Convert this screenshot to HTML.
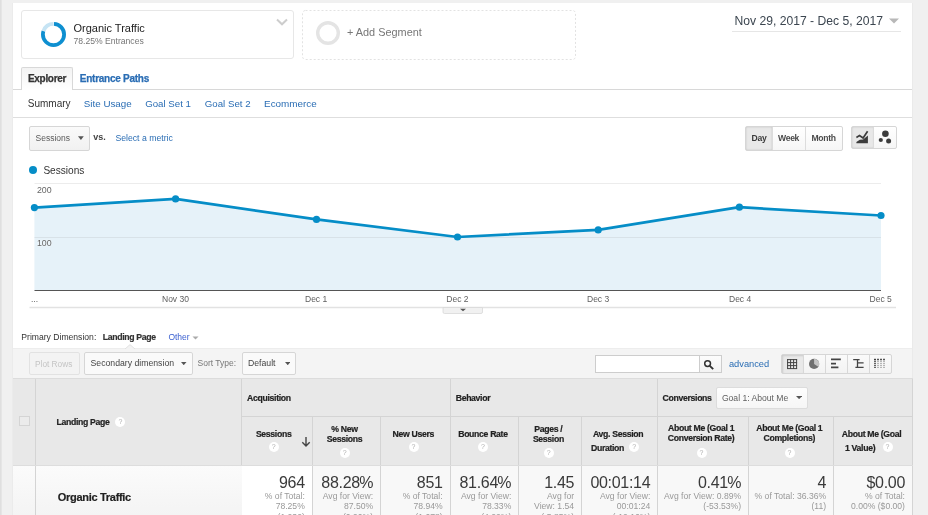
<!DOCTYPE html>
<html><head><meta charset="utf-8">
<style>
*{box-sizing:border-box;margin:0;padding:0}
html,body{width:928px;height:515px;overflow:hidden;background:#f0f0f0;font-family:"Liberation Sans",sans-serif;color:#333}
.a{position:absolute;white-space:nowrap}
#lstrip{position:absolute;left:0;top:0;width:2px;height:515px;background:linear-gradient(90deg,#dcdcdc,#e8e8e8)}
#panel{position:absolute;left:13px;top:3px;width:899px;height:512px;background:#fff;box-shadow:-1px 0 0 #ebebeb,1px 0 0 #eaeaea}
.seg{position:absolute;border:1px solid #e7e7e7;border-radius:3px;background:#fff}
.link{color:#2a6db4}
.btn{position:absolute;border:1px solid #d6d6d6;border-radius:2px;background:linear-gradient(#fafafa,#f1f1f1)}
.th{position:absolute;background:#e8e8e8}
.vl{position:absolute;width:1px;background:#d4d4d4}
.hl{position:absolute;height:1px;background:#d4d4d4}
.hdr{font-weight:700;font-size:8.7px;letter-spacing:-0.33px;color:#222;-webkit-text-stroke:0.2px #222}
.q{position:absolute;width:10px;height:10px;border-radius:50%;background:#fff;color:#b0b0b0;font-size:7px;line-height:10px;text-align:center;font-weight:400}
.big{font-size:16px;letter-spacing:-0.3px;color:#3a3a3a;line-height:17px;margin-top:-0.6px}
.pc{letter-spacing:-1px}
.sub{font-size:8.6px;color:#999;line-height:10.5px}
</style></head><body><div style="position:absolute;left:0;top:0;width:928px;height:515px;will-change:transform">
<div id="lstrip"></div>
<div id="panel"></div>

<!-- segment boxes -->
<div class="seg" style="left:21px;top:10px;width:273px;height:49px"></div>
<svg class="a" style="left:40.3px;top:20.6px" width="27" height="27" viewBox="0 0 27 27">
  <g transform="rotate(-90 13.5 13.5)" fill="none" stroke-width="3.8">
  <circle cx="13.5" cy="13.5" r="10.6" stroke="#c6e4f4" stroke-dasharray="0 53.4 13.4 100"/>
  <circle cx="13.5" cy="13.5" r="10.6" stroke="#0e8fd0" stroke-dasharray="0 0.5 52.5 100"/>
  </g>
</svg>
<div class="a" style="left:73.5px;top:22px;font-size:11px;color:#222">Organic Traffic</div>
<div class="a" style="left:73.5px;top:35.5px;font-size:8.6px;color:#757575">78.25% Entrances</div>
<svg class="a" style="left:275px;top:18px" width="14" height="9" viewBox="0 0 14 9"><path d="M2 1.6 L7 6.3 L12 1.6" fill="none" stroke="#cdcdcd" stroke-width="2"/></svg>

<svg class="a" style="left:300.8px;top:8.8px" width="276" height="52" viewBox="0 0 276 52"><rect x="1.5" y="1.5" width="273" height="49" rx="3" fill="#fff" stroke="#e2e2e2" stroke-width="1" stroke-dasharray="2 2"/></svg>
<svg class="a" style="left:314.7px;top:20px" width="26" height="26" viewBox="0 0 26 26"><circle cx="13" cy="13" r="10.3" fill="none" stroke="#e4e4e4" stroke-width="3.4"/></svg>
<div class="a" style="left:347px;top:26px;font-size:10.9px;color:#777">+ Add Segment</div>

<!-- date -->
<div class="a" style="left:734.5px;top:14px;font-size:12.15px;color:#3c4650">Nov 29, 2017 - Dec 5, 2017</div>
<svg class="a" style="left:888px;top:18px" width="12" height="6" viewBox="0 0 12 6"><path d="M1 0.5 L11 0.5 L6 5.5Z" fill="#b8b8b8"/></svg>
<div class="a" style="left:732px;top:30.5px;width:169px;height:1px;background:#e6e6e6"></div>

<!-- tabs -->
<div class="hl" style="left:13px;top:89px;width:899px;background:#d8d8d8"></div>
<div class="a" style="left:20.6px;top:67px;width:52px;height:22.5px;border:1px solid #d8d8d8;border-bottom:none;background:linear-gradient(#f3f3f3,#fff);border-radius:2px 2px 0 0"></div>
<div class="a" style="left:28px;top:72.5px;font-size:10px;letter-spacing:-0.32px;font-weight:700;color:#333;-webkit-text-stroke:0.25px #333">Explorer</div>
<div class="a link" style="left:79.8px;top:72.5px;font-size:10px;letter-spacing:-0.26px;font-weight:700;-webkit-text-stroke:0.25px #2a6db4">Entrance Paths</div>
<div class="a" style="left:27.8px;top:98px;font-size:10px;color:#333">Summary</div>
<div class="a link" style="left:83.8px;top:97.5px;font-size:9.8px">Site Usage</div>
<div class="a link" style="left:145.2px;top:97.5px;font-size:9.7px">Goal Set 1</div>
<div class="a link" style="left:204.8px;top:97.5px;font-size:9.7px">Goal Set 2</div>
<div class="a link" style="left:264.1px;top:97.5px;font-size:9.9px">Ecommerce</div>
<div class="hl" style="left:13px;top:117px;width:899px;background:#dedede"></div>

<!-- chart controls -->
<div class="btn" style="left:29px;top:126px;width:61px;height:25px"></div>
<div class="a" style="left:35.5px;top:133.4px;font-size:8.5px;color:#5a5a5a">Sessions</div>
<svg class="a" style="left:77.8px;top:136px" width="6" height="4" viewBox="0 0 6 4"><path d="M0 0.2H5.8L2.9 4Z" fill="#555"/></svg>
<div class="a" style="left:93.3px;top:131.8px;font-size:9px;font-weight:700;color:#444">vs.</div>
<div class="a link" style="left:115.4px;top:133.2px;font-size:8.7px">Select a metric</div>

<div class="btn" style="left:745px;top:126px;width:98px;height:24.5px;background:linear-gradient(#fff,#f6f6f6)"></div>
<div class="a" style="left:746px;top:127px;width:26px;height:22.5px;background:#e8e8e8;box-shadow:inset 0 0 2px rgba(0,0,0,.18)"></div>
<div class="vl" style="left:772px;top:127px;height:22.5px;background:#dcdcdc"></div>
<div class="vl" style="left:805px;top:127px;height:22.5px;background:#dcdcdc"></div>
<div class="a" style="left:751.5px;top:133.2px;font-size:8.6px;letter-spacing:-0.3px;font-weight:700;color:#3a3a3a">Day</div>
<div class="a" style="left:778px;top:133.2px;font-size:8.6px;letter-spacing:-0.3px;font-weight:700;color:#4a4a4a">Week</div>
<div class="a" style="left:811.5px;top:133.2px;font-size:8.6px;letter-spacing:-0.3px;font-weight:700;color:#4a4a4a">Month</div>

<div class="btn" style="left:851px;top:126px;width:46px;height:22.6px;background:linear-gradient(#fff,#f6f6f6)"></div>
<div class="a" style="left:852px;top:127px;width:21.5px;height:20.6px;background:#e8e8e8;box-shadow:inset 0 0 2px rgba(0,0,0,.18)"></div>
<div class="vl" style="left:873px;top:127px;height:20.6px;background:#dcdcdc"></div>
<svg class="a" style="left:848px;top:124px" width="50" height="26" viewBox="0 0 50 26"><path d="M8.4 19.3H19.9V11.5L15.1 15.4L11.8 15.7L8.4 17.9Z" fill="#3c3c3c"/><path d="M8.4 13.4L11.5 11.6L15.1 14L19.6 7.2" fill="none" stroke="#3c3c3c" stroke-width="1.7"/><circle cx="37.4" cy="9.8" r="3.3" fill="#3c3c3c"/><circle cx="32.8" cy="16" r="2.1" fill="#3c3c3c"/><circle cx="40.6" cy="17.1" r="2.5" fill="#3c3c3c"/></svg>

<!-- legend -->
<div class="a" style="left:29px;top:166px;width:8px;height:8px;border-radius:50%;background:#058dc7"></div>
<div class="a" style="left:43.4px;top:164.6px;font-size:10.1px;color:#333">Sessions</div>

<!-- chart -->
<svg class="a" style="left:0;top:0" width="928" height="320" viewBox="0 0 928 320">
  <line x1="34.5" y1="183.5" x2="881" y2="183.5" stroke="#ececec" stroke-width="1"/>
  <path d="M34.4 207.6 L175.6 198.95 L316.5 219.4 L457.5 237 L598.2 229.9 L739.4 207.2 L881 215.5 L881 290.5 L34.4 290.5Z" fill="#e6f2f9"/>
  <line x1="34.5" y1="237.5" x2="881" y2="237.5" stroke="#d8e2e8" stroke-width="1"/>
  <line x1="34.5" y1="290.5" x2="881" y2="290.5" stroke="#555" stroke-width="1"/>
  <path d="M34.4 207.6 L175.6 198.95 L316.5 219.4 L457.5 237 L598.2 229.9 L739.4 207.2 L881 215.5" fill="none" stroke="#058dc7" stroke-width="2.7" stroke-linejoin="round"/>
  <g fill="#058dc7">
   <circle cx="34.4" cy="207.6" r="3.6"/><circle cx="175.6" cy="198.95" r="3.6"/><circle cx="316.5" cy="219.4" r="3.6"/><circle cx="457.5" cy="237" r="3.6"/><circle cx="598.2" cy="229.9" r="3.6"/><circle cx="739.4" cy="207.2" r="3.6"/><circle cx="881" cy="215.5" r="3.6"/>
  </g>
  <line x1="29.5" y1="307.5" x2="896" y2="307.5" stroke="#e2e2e2" stroke-width="1.5"/>
  <path d="M443 307.5 H482.5 V312 Q482.5 313.5 481 313.5 H444.5 Q443 313.5 443 312Z" fill="#f1f1f1" stroke="#d8d8d8" stroke-width="0.8"/>
  <path d="M460 308.8 H466 L463 311.3Z" fill="#555"/>
</svg>
<div class="a" style="left:36.9px;top:184.7px;font-size:8.8px;color:#666;text-shadow:0 0 2px #fff">200</div>
<div class="a" style="left:36.9px;top:237.7px;font-size:8.8px;color:#666;text-shadow:0 0 2px #fff">100</div>
<div class="a" style="left:31px;top:293.6px;font-size:8.5px;color:#606060">...</div>
<div class="a" style="left:162px;top:293.6px;font-size:8.5px;color:#606060">Nov 30</div>
<div class="a" style="left:305px;top:293.6px;font-size:8.5px;color:#606060">Dec 1</div>
<div class="a" style="left:446.3px;top:293.6px;font-size:8.5px;color:#606060">Dec 2</div>
<div class="a" style="left:587px;top:293.6px;font-size:8.5px;color:#606060">Dec 3</div>
<div class="a" style="left:729px;top:293.6px;font-size:8.5px;color:#606060">Dec 4</div>
<div class="a" style="left:869.6px;top:293.6px;font-size:8.5px;color:#606060">Dec 5</div>

<!-- primary dimension -->
<div class="a" style="left:21.3px;top:332px;font-size:8.6px;color:#333">Primary Dimension:</div>
<div class="a" style="left:102.8px;top:332.2px;font-size:8.7px;letter-spacing:-0.33px;font-weight:700;color:#333;-webkit-text-stroke:0.2px #333">Landing Page</div>
<div class="a" style="left:168.4px;top:332px;font-size:8.5px;color:#3a5fd0">Other</div>
<svg class="a" style="left:192px;top:336px" width="7" height="4" viewBox="0 0 7 4"><path d="M0.5 0.5H6.5L3.5 3.5Z" fill="#aaa"/></svg>

<!-- toolbar -->
<div class="a" style="left:13px;top:348px;width:899px;height:31px;background:#f4f4f4;border-top:1.5px solid #ededed"></div>
<svg class="a" style="left:125px;top:343.5px" width="10" height="5" viewBox="0 0 10 5"><path d="M0 5 L5 0.6 L10 5" fill="#f3f3f3" stroke="#dcdcdc" stroke-width="0.8"/></svg>
<div class="btn" style="left:29.4px;top:352.3px;width:50.5px;height:22.5px;background:#f3f3f3;border-color:#e2e2e2"></div>
<div class="a" style="left:35px;top:358.5px;font-size:8.3px;color:#c4c4c4">Plot Rows</div>
<div class="btn" style="left:84.4px;top:352.3px;width:109px;height:22.5px;background:#fafafa"></div>
<div class="a" style="left:90.5px;top:357.6px;font-size:8.7px;color:#444">Secondary dimension</div>
<svg class="a" style="left:181px;top:362px" width="5.5" height="3.2" viewBox="0 0 5.5 3.2"><path d="M0 0H5.5L2.75 3.2Z" fill="#555"/></svg>
<div class="a" style="left:197.5px;top:357.6px;font-size:8.5px;color:#777">Sort Type:</div>
<div class="btn" style="left:241.8px;top:352.3px;width:54px;height:22.5px;background:#fafafa"></div>
<div class="a" style="left:248px;top:357.6px;font-size:8.7px;color:#444">Default</div>
<svg class="a" style="left:284.5px;top:362px" width="5.5" height="3.2" viewBox="0 0 5.5 3.2"><path d="M0 0H5.5L2.75 3.2Z" fill="#555"/></svg>

<div class="a" style="left:595px;top:355px;width:127px;height:18px;border:1px solid #cdcdcd;background:#fff"></div>
<div class="a" style="left:699px;top:355px;width:23px;height:18px;border:1px solid #cdcdcd;background:linear-gradient(#fcfcfc,#f3f3f3)"></div>
<svg class="a" style="left:703px;top:358.5px" width="12" height="12" viewBox="0 0 12 12"><circle cx="4.6" cy="4.6" r="2.9" fill="none" stroke="#333" stroke-width="1.5"/><path d="M6.8 6.8L10.2 10.2" stroke="#333" stroke-width="1.9"/></svg>
<div class="a link" style="left:728.9px;top:358.5px;font-size:9.3px">advanced</div>

<div class="btn" style="left:780.5px;top:354px;width:111.2px;height:19.8px;background:linear-gradient(#fafafa,#f3f3f3)"></div>
<div class="a" style="left:781.5px;top:355px;width:21.5px;height:17.8px;background:#e9e9e9;box-shadow:inset 1px 1px 2px rgba(0,0,0,.13)"></div>
<div class="vl" style="left:803px;top:355px;height:17.8px;background:#d8d8d8"></div>
<div class="vl" style="left:825px;top:355px;height:17.8px;background:#d8d8d8"></div>
<div class="vl" style="left:847px;top:355px;height:17.8px;background:#d8d8d8"></div>
<div class="vl" style="left:869px;top:355px;height:17.8px;background:#d8d8d8"></div>
<svg class="a" style="left:786px;top:358px" width="12" height="12" viewBox="0 0 12 12"><path d="M1.6 1.1V10.9 M4.6 1.1V10.9 M7.6 1.1V10.9 M10.6 1.1V10.9 M1.1 1.6H11.1 M1.1 4.6H11.1 M1.1 7.6H11.1 M1.1 10.6H11.1" fill="none" stroke="#444" stroke-width="1"/></svg>
<svg class="a" style="left:808px;top:358px" width="12" height="12" viewBox="0 0 12 12"><circle cx="6.1" cy="5.9" r="5.1" fill="#707070"/><path d="M6.1 5.9V0.8A5.1 5.1 0 0 1 10.3 8.8Z" fill="#c4c4c4"/></svg>
<svg class="a" style="left:830px;top:358px" width="12" height="12" viewBox="0 0 12 12"><path d="M1 1.4H10.8M1 5.6H6M1 9.4H8.4" stroke="#444" stroke-width="1.6"/></svg>
<svg class="a" style="left:852px;top:358px" width="12" height="12" viewBox="0 0 12 12"><path d="M1.2 1.7H7.6M5.5 1.7V9.4M5.5 4.9H11.6M3.4 9.4H11.6" fill="none" stroke="#444" stroke-width="1.3"/></svg>
<svg class="a" style="left:873px;top:358px" width="14" height="12" viewBox="0 0 14 12"><path d="M2 1V10M5 1V10M8 1V10M11 1V10" stroke="#777" stroke-width="1" stroke-dasharray="1.2 0.8"/><path d="M1 1.5H12.5" stroke="#555" stroke-width="1.3" stroke-dasharray="2 1"/><path d="M2 1V10" stroke="#333" stroke-width="1.2" stroke-dasharray="1.2 0.8"/></svg>

<!-- table header -->
<div class="th" style="left:13px;top:378.3px;width:899.5px;height:87px;border-top:1px solid #dcdcdc"></div>
<div class="a" style="left:19px;top:415.6px;width:10.6px;height:10.6px;border:1px solid #d4d4d4;background:#ebebeb"></div>
<div class="vl" style="left:35px;top:379px;height:136px"></div>
<div class="vl" style="left:241px;top:379px;height:136px"></div>
<div class="vl" style="left:449.8px;top:379px;height:136px"></div>
<div class="vl" style="left:657px;top:379px;height:136px"></div>
<div class="vl" style="left:912.2px;top:379px;height:136px"></div>
<div class="hl" style="left:241px;top:416px;width:672px"></div>
<div class="vl" style="left:312px;top:417px;height:98px"></div>
<div class="vl" style="left:380.3px;top:417px;height:98px"></div>
<div class="vl" style="left:518px;top:417px;height:98px"></div>
<div class="vl" style="left:581.3px;top:417px;height:98px"></div>
<div class="vl" style="left:748.3px;top:417px;height:98px"></div>
<div class="vl" style="left:833.3px;top:417px;height:98px"></div>
<div class="hl" style="left:13px;top:465px;width:900px;background:#dddddd"></div>

<div class="a hdr" style="left:56.5px;top:417.0px">Landing Page</div>
<div class="q" style="left:115.4px;top:417.2px">?</div>
<div class="a hdr" style="left:247.1px;top:393.0px">Acquisition</div>
<div class="a hdr" style="left:455.7px;top:393.0px">Behavior</div>
<div class="a hdr" style="left:662.6px;top:393.4px">Conversions</div>
<div class="btn" style="left:716px;top:386.5px;width:91.5px;height:22.8px;background:linear-gradient(#fdfdfd,#f6f6f6);border-color:#dcdcdc"></div>
<div class="a" style="left:721.9px;top:393px;font-size:8.6px;color:#5f5f5f">Goal 1: About Me</div>
<svg class="a" style="left:796px;top:396px" width="6.2" height="3.2" viewBox="0 0 6.2 3.2"><path d="M0 0H6.2L3.1 3.2Z" fill="#555"/></svg>

<div class="a hdr" style="left:255.9px;top:428.9px">Sessions</div>
<div class="q" style="left:268.7px;top:441.8px">?</div>
<svg class="a" style="left:301px;top:436px" width="10" height="11" viewBox="0 0 10 11"><path d="M5 1V10M1.3 6.3L5 10L8.7 6.3" fill="none" stroke="#444" stroke-width="1.4"/></svg>
<div class="a hdr" style="left:310.5px;width:68px;top:423.9px;text-align:center;line-height:10.5px">% New<br>Sessions</div>
<div class="q" style="left:339.6px;top:447.8px">?</div>
<div class="a hdr" style="left:378.8px;width:69px;top:428.9px;text-align:center">New Users</div>
<div class="q" style="left:408.5px;top:441.8px">?</div>
<div class="a hdr" style="left:448.6px;width:68.7px;top:428.9px;text-align:center">Bounce Rate</div>
<div class="q" style="left:478px;top:441.8px">?</div>
<div class="a hdr" style="left:517px;width:62.8px;top:423.9px;text-align:center;line-height:10.5px">Pages /<br>Session</div>
<div class="q" style="left:543.6px;top:447.8px">?</div>
<div class="a hdr" style="left:580.1px;width:76px;top:428.9px;text-align:center">Avg. Session</div>
<div class="a hdr" style="left:591px;top:443.1px">Duration</div>
<div class="q" style="left:629.3px;top:441.7px">?</div>
<div class="a hdr" style="left:655.7px;width:90.8px;top:424.2px;text-align:center;line-height:9.6px">About Me (Goal 1<br>Conversion Rate)</div>
<div class="q" style="left:696.5px;top:448px">?</div>
<div class="a hdr" style="left:746.8px;width:85px;top:424.2px;text-align:center;line-height:9.6px">About Me (Goal 1<br>Completions)</div>
<div class="q" style="left:784.5px;top:448px">?</div>
<div class="a hdr" style="left:832.1px;width:79px;top:428.7px;text-align:center">About Me (Goal</div>
<div class="a hdr" style="left:845px;top:443px">1 Value)</div>
<div class="q" style="left:882.5px;top:442.4px">?</div>

<!-- data row -->
<div class="a" style="left:13px;top:466px;width:229px;height:49px;background:linear-gradient(#fbfbfb,#f4f4f4)"></div>
<div class="vl" style="left:35px;top:466px;height:49px"></div>
<div class="a" style="left:57.8px;top:490.8px;font-size:11px;letter-spacing:-0.3px;font-weight:700;color:#222;-webkit-text-stroke:0.2px #222">Organic Traffic</div>
<div class="a" style="left:242px;top:466px;width:70px;height:49px;background:#fff"></div>
<div class="a" style="left:312.5px;top:466px;width:345px;height:49px;background:#f8f8f8"></div>
<div class="a" style="left:658px;top:466px;width:254px;height:49px;background:#f8f8f8"></div>
<div class="vl" style="left:312px;top:466px;height:49px"></div>
<div class="vl" style="left:380.3px;top:466px;height:49px"></div>
<div class="vl" style="left:449.8px;top:466px;height:49px"></div>
<div class="vl" style="left:518px;top:466px;height:49px"></div>
<div class="vl" style="left:581.3px;top:466px;height:49px"></div>
<div class="vl" style="left:657px;top:466px;height:49px"></div>
<div class="vl" style="left:748.3px;top:466px;height:49px"></div>
<div class="vl" style="left:833.3px;top:466px;height:49px"></div>
<div class="vl" style="left:912.2px;top:466px;height:49px"></div>

<!-- data values -->
<div class="a" style="left:242px;width:62.8px;top:474.5px;text-align:right"><div class="big">964</div><div class="sub">% of Total:<br>78.25%<br>(1,232)</div></div>
<div class="a" style="left:312.5px;width:60.6px;top:474.5px;text-align:right"><div class="big">88.2<span class="pc">8</span>%</div><div class="sub">Avg for View:<br>87.50%<br>(0.90%)</div></div>
<div class="a" style="left:380.8px;width:61.8px;top:474.5px;text-align:right"><div class="big">851</div><div class="sub">% of Total:<br>78.94%<br>(1,078)</div></div>
<div class="a" style="left:450.3px;width:61.0px;top:474.5px;text-align:right"><div class="big">81.6<span class="pc">4</span>%</div><div class="sub">Avg for View:<br>78.33%<br>(4.22%)</div></div>
<div class="a" style="left:519px;width:55.1px;top:474.5px;text-align:right"><div class="big">1.45</div><div class="sub">Avg for<br>View: 1.54<br>(-5.85%)</div></div>
<div class="a" style="left:581.8px;width:68.5px;top:474.5px;text-align:right"><div class="big">00:01:14</div><div class="sub">Avg for View:<br>00:01:24<br>(-12.16%)</div></div>
<div class="a" style="left:658px;width:83.1px;top:474.5px;text-align:right"><div class="big">0.4<span class="pc">1</span>%</div><div class="sub">Avg for View: 0.89%<br>(-53.53%)</div></div>
<div class="a" style="left:748.8px;width:77.3px;top:474.5px;text-align:right"><div class="big">4</div><div class="sub">% of Total: 36.36%<br>(11)</div></div>
<div class="a" style="left:833.8px;width:71.2px;top:474.5px;text-align:right"><div class="big">$0.00</div><div class="sub">% of Total:<br>0.00% ($0.00)</div></div>
</div></body></html>
